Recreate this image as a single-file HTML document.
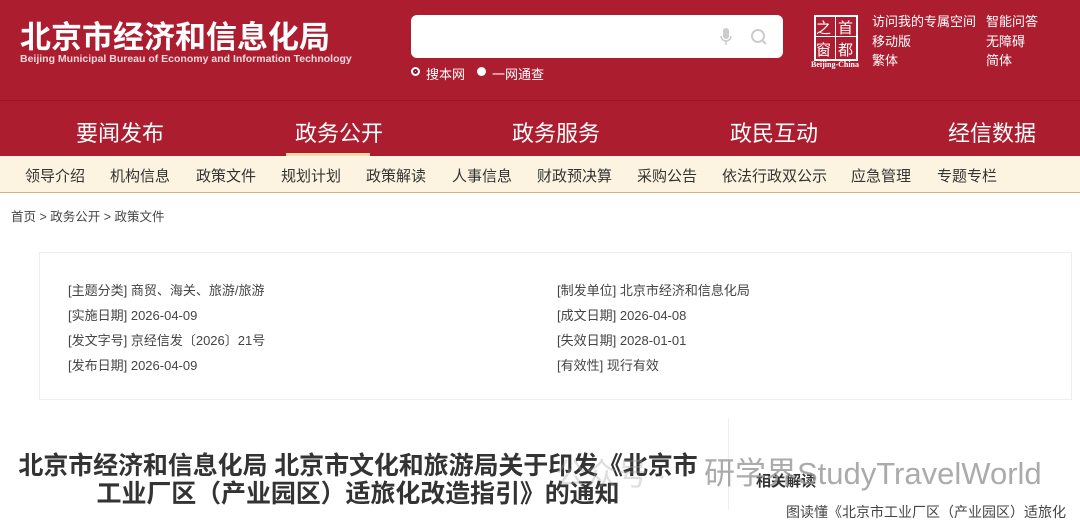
<!DOCTYPE html>
<html><head><meta charset="utf-8"><style>
*{margin:0;padding:0;box-sizing:border-box}
body{width:1080px;height:510px;overflow:hidden;background:#fff;font-family:"Liberation Sans","Noto Sans CJK SC",sans-serif;position:relative}
.hdr{position:absolute;left:0;top:0;width:1080px;height:156px;background:#ad1d30}
.a{position:absolute;white-space:nowrap}
.sub{position:absolute;left:0;top:156px;width:1080px;height:37px;background:#fcf4e0;border-bottom:1px solid #d9b27a}
.sub span{position:absolute;top:9px;font-size:15px;color:#333}
.nav span{position:absolute;top:116px;font-size:22px;color:#fff}
.info{position:absolute;left:39px;top:252px;width:1033px;height:148px;border:1px solid #eee}
.info div{position:absolute;font-size:13px;color:#444}
</style></head><body>
<div class="hdr"></div>
<div class="a" style="left:20px;top:12px;font-size:31px;font-weight:bold;color:#fff">北京市经济和信息化局</div>
<div class="a" style="left:20px;top:53px;font-size:10.5px;font-weight:bold;color:#f0d8dc">Beijing Municipal Bureau of Economy and Information Technology</div>
<div class="a" style="left:411px;top:15px;width:372px;height:43px;background:#fff;border-radius:6px"></div>
<svg class="a" style="left:719px;top:27px" width="52" height="20"><rect x="4" y="1" width="6" height="11" rx="3" fill="#ccc"/><path d="M2 9a5 5 0 0 0 10 0M7 14v4" stroke="#ccc" stroke-width="1.5" fill="none"/><circle cx="39" cy="9" r="6" stroke="#ccc" stroke-width="2" fill="none"/><path d="M43 13l4 4" stroke="#ccc" stroke-width="2"/></svg>
<div class="a" style="left:411px;top:67px;width:9px;height:9px;border-radius:50%;background:#fff;border:2px solid #fff;box-shadow:inset 0 0 0 2px #7a1020"></div>
<div class="a" style="left:426px;top:64px;font-size:13px;color:#fff">搜本网</div>
<div class="a" style="left:477px;top:67px;width:9px;height:9px;border-radius:50%;background:#fff"></div>
<div class="a" style="left:492px;top:64px;font-size:13px;color:#fff">一网通查</div>
<div class="a" style="left:814px;top:15px;width:44px;height:46px;border:2px solid #fff"></div>
<div class="a" style="left:835px;top:15px;width:1px;height:46px;background:#fff"></div>
<div class="a" style="left:814px;top:36px;width:44px;height:1px;background:#fff"></div>
<div class="a" style="left:816px;top:17px;font-size:15px;color:#fff">之</div>
<div class="a" style="left:838px;top:17px;font-size:15px;color:#fff">首</div>
<div class="a" style="left:816px;top:39px;font-size:15px;color:#fff">窗</div>
<div class="a" style="left:838px;top:39px;font-size:15px;color:#fff">都</div>
<div class="a" style="left:811px;top:60px;font-size:8px;font-weight:bold;color:#fff;font-family:'Liberation Serif',serif">Beijing-China</div>
<div class="a" style="left:872px;top:12px;font-size:13px;color:#fff;line-height:19.5px">访问我的专属空间<br>移动版<br>繁体</div>
<div class="a" style="left:986px;top:12px;font-size:13px;color:#fff;line-height:19.5px">智能问答<br>无障碍<br>简体</div>
<div class="a" style="left:0;top:100px;width:1080px;height:1px;background:#951526"></div>
<div class="nav"><span style="left:76px">要闻发布</span><span style="left:295px">政务公开</span><span style="left:512px">政务服务</span><span style="left:730px">政民互动</span><span style="left:948px">经信数据</span></div>
<div class="a" style="left:286px;top:153px;width:84px;height:3px;background:#f3d9a8"></div>
<div class="sub"><span style="left:25px">领导介绍</span><span style="left:110px">机构信息</span><span style="left:196px">政策文件</span><span style="left:281px">规划计划</span><span style="left:366px">政策解读</span><span style="left:452px">人事信息</span><span style="left:537px">财政预决算</span><span style="left:637px">采购公告</span><span style="left:722px">依法行政双公示</span><span style="left:851px">应急管理</span><span style="left:937px">专题专栏</span></div>
<div class="a" style="left:11px;top:206px;font-size:12.5px;color:#444">首页 &gt; 政务公开 &gt; 政策文件</div>
<div class="info">
<div style="left:28px;top:27px">[主题分类] 商贸、海关、旅游/旅游</div>
<div style="left:28px;top:52px">[实施日期] 2026-04-09</div>
<div style="left:28px;top:77px">[发文字号] 京经信发〔2026〕21号</div>
<div style="left:28px;top:102px">[发布日期] 2026-04-09</div>
<div style="left:517px;top:27px">[制发单位] 北京市经济和信息化局</div>
<div style="left:517px;top:52px">[成文日期] 2026-04-08</div>
<div style="left:517px;top:77px">[失效日期] 2028-01-01</div>
<div style="left:517px;top:102px">[有效性] 现行有效</div>
</div>
<div class="a" style="left:728px;top:418px;width:1px;height:92px;background:#eee"></div>
<div class="a" style="left:8px;top:452px;width:700px;text-align:center;font-size:25px;font-weight:bold;color:#333;line-height:28px;letter-spacing:-0.1px">北京市经济和信息化局 北京市文化和旅游局关于印发《北京市<br>工业厂区（产业园区）适旅化改造指引》的通知</div>
<div class="a" style="left:756px;top:470px;font-size:15px;font-weight:bold;color:#333">相关解读</div>
<div class="a" style="left:786px;top:502px;font-size:14px;color:#444">图读懂《北京市工业厂区（产业园区）适旅化</div>
<div class="a" style="left:555px;top:449px;font-size:31px;color:rgba(160,160,160,0.35)">公众号 ·</div>
<div class="a" style="left:704px;top:448px;font-size:31px;color:rgba(150,150,150,0.8)">研学界StudyTravelWorld</div>
</body></html>
